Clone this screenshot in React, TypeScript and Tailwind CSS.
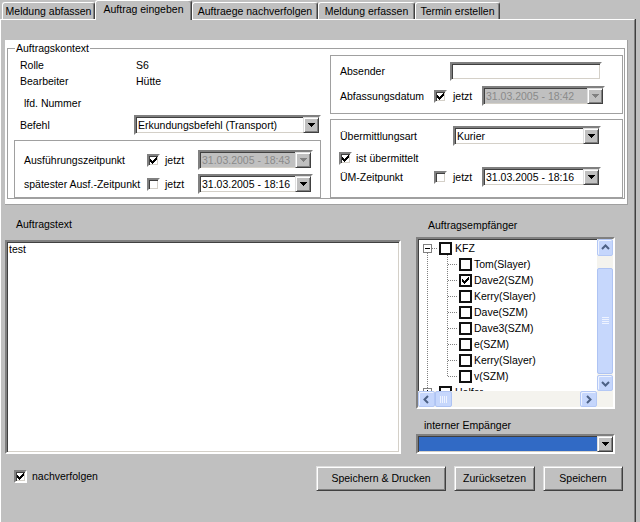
import React from "react";

const sunken =
  "border-2 border-t-[#808080] border-l-[#808080] border-r-white border-b-white shadow-[inset_1px_1px_0_#404040,inset_-1px_-1px_0_#d4d0c8]";
const raised =
  "border border-t-[#dfdfdf] border-l-[#dfdfdf] border-r-[#404040] border-b-[#404040] shadow-[inset_1px_1px_0_#ffffff,inset_-1px_-1px_0_#808080]";

function Arrow({ gray }: { gray?: boolean }) {
  return (
    <svg width="7" height="4" viewBox="0 0 7 4" shapeRendering="crispEdges">
      <path d="M0 0H7V1H6V2H5V3H4V4H3V3H2V2H1V1H0Z" fill={gray ? "#808080" : "#000"} />
    </svg>
  );
}

function Tick() {
  const cols = [2, 3, 4, 3, 2, 1, 0];
  return (
    <svg width="7" height="7" viewBox="0 0 7 7" shapeRendering="crispEdges">
      {cols.map((y, x) => (
        <rect key={x} x={x} y={y} width="1" height="3" fill="#000" />
      ))}
    </svg>
  );
}

function Check({ checked }: { checked?: boolean }) {
  return (
    <div className={`flex h-[13px] w-[13px] flex-none items-center justify-center bg-white ${sunken}`}>
      {checked && <Tick />}
    </div>
  );
}

function TreeCheck({ checked }: { checked?: boolean }) {
  return (
    <div className="flex h-[13px] w-[13px] flex-none items-center justify-center border-2 border-[#111] bg-white">
      {checked && <Tick />}
    </div>
  );
}

function Combo({
  className,
  text,
  disabled,
  blue,
}: {
  className: string;
  text?: string;
  disabled?: boolean;
  blue?: boolean;
}) {
  const fill = blue ? "bg-[#316ac5]" : disabled ? "bg-[#c0c0c0] text-[#8a8a8a]" : "bg-white";
  return (
    <div className={`flex h-[20px] flex-none ${sunken} ${fill} ${className}`}>
      <div className="flex-1 overflow-hidden whitespace-nowrap pl-[2px] leading-[16px]">{text}</div>
      <div className={`flex w-[16px] items-center justify-center bg-[#c0c0c0] ${raised}`}>
        <Arrow gray={disabled} />
      </div>
    </div>
  );
}

function Jetzt({ checked, label, labelW }: { checked?: boolean; label: string; labelW: string }) {
  return (
    <>
      <span className={`flex-none whitespace-nowrap ${labelW}`}>{label}</span>
      <Check checked={checked} />
      <span className="ml-[5px] w-[33px] flex-none">jetzt</span>
    </>
  );
}

function Tab({ label, w, active }: { label: string; w: string; active?: boolean }) {
  return (
    <div
      className={`flex flex-none items-center justify-center whitespace-nowrap rounded-t-[3px] border-t border-l border-r border-t-white border-l-white border-r-[#404040] bg-[#c0c0c0] shadow-[inset_-1px_0_0_#808080] ${w} ${
        active ? "relative z-10 -mb-px h-[20px] pb-[2px]" : "h-[17px]"
      }`}
    >
      {label}
    </div>
  );
}

function Chevron({ dir }: { dir: "up" | "down" | "left" | "right" }) {
  const pts = {
    up: "1,6 4.5,2.5 8,6",
    down: "1,3 4.5,6.5 8,3",
    left: "6,1 2.5,4.5 6,8",
    right: "3,1 6.5,4.5 3,8",
  }[dir];
  return (
    <svg width="9" height="9" viewBox="0 0 9 9">
      <polyline points={pts} fill="none" stroke="#4d6185" strokeWidth="2" />
    </svg>
  );
}

function ScrollBtn({ dir, className }: { dir: "up" | "down" | "left" | "right"; className: string }) {
  return (
    <div
      className={`flex flex-none items-center justify-center rounded-[2px] border border-[#b4c8f5] bg-[#c5d6fc] shadow-[inset_1px_1px_0_#eef3ff] ${className}`}
    >
      <Chevron dir={dir} />
    </div>
  );
}

const kids: [string, boolean][] = [
  ["Tom(Slayer)", false],
  ["Dave2(SZM)", true],
  ["Kerry(Slayer)", false],
  ["Dave(SZM)", false],
  ["Dave3(SZM)", false],
  ["e(SZM)", false],
  ["Kerry(Slayer)", false],
  ["v(SZM)", false],
];

function Expander({ open }: { open?: boolean }) {
  return (
    <div className="relative flex h-[9px] w-[9px] flex-none items-center justify-center border border-[#808080] bg-white">
      <div className="h-px w-[5px] bg-black" />
      {!open && <div className="absolute h-[5px] w-px bg-black" />}
    </div>
  );
}

function Tree() {
  return (
    <div className={`mt-[5px] flex h-[172px] flex-col bg-white ${sunken}`}>
      <div className="flex h-[152px]">
        <div className="relative flex-1 overflow-hidden pt-[1px]">
          <svg className="absolute left-0 top-0" width="179" height="152">
            <g stroke="#808080" strokeDasharray="1 1" shapeRendering="crispEdges">
              <line x1="9.5" y1="14" x2="9.5" y2="149" />
              <line x1="14" y1="9.5" x2="20" y2="9.5" />
              <line x1="29.5" y1="16" x2="29.5" y2="137" />
              {kids.map((_, k) => (
                <line key={k} x1="30" y1={25.5 + 16 * k} x2="40" y2={25.5 + 16 * k} />
              ))}
            </g>
          </svg>
          <div className="relative flex h-[16px] items-center pl-[5px]">
            <Expander open />
            <div className="ml-[7px]">
              <TreeCheck />
            </div>
            <span className="ml-[3px]">KFZ</span>
          </div>
          {kids.map(([name, c], i) => (
            <div key={i} className="relative flex h-[16px] items-center pl-[41px]">
              <TreeCheck checked={c} />
              <span className="ml-[2px] whitespace-nowrap">{name}</span>
            </div>
          ))}
          <div className="relative flex h-[16px] items-center pl-[5px]">
            <Expander />
            <div className="ml-[7px]">
              <TreeCheck />
            </div>
            <span className="ml-[3px]">Helfer</span>
          </div>
        </div>
        <div className="flex w-[16px] flex-none flex-col bg-[#f4f3ee]">
          <ScrollBtn dir="up" className="h-[17px]" />
          <div className="h-[12px] flex-none" />
          <div className="flex flex-1 items-center justify-center rounded-[2px] border border-[#aec3f3] bg-[#c6d7fc]">
            <svg width="7" height="8" viewBox="0 0 7 8" shapeRendering="crispEdges">
              {[0, 2, 4, 6].map((y) => (
                <rect key={y} x="0" y={y} width="7" height="1" fill="#eef3ff" />
              ))}
            </svg>
          </div>
          <div className="h-[1px] flex-none" />
          <ScrollBtn dir="down" className="h-[16px]" />
        </div>
      </div>
      <div className="flex h-[16px]">
        <div className="flex w-[179px] bg-[#f4f3ee]">
          <ScrollBtn dir="left" className="w-[17px]" />
          <div className="flex w-[17px] flex-none items-center justify-center rounded-[2px] border border-[#aec3f3] bg-[#c6d7fc]">
            <svg width="8" height="7" viewBox="0 0 8 7" shapeRendering="crispEdges">
              {[0, 2, 4, 6].map((x) => (
                <rect key={x} x={x} y="0" width="1" height="7" fill="#eef3ff" />
              ))}
            </svg>
          </div>
          <div className="flex-1" />
          <ScrollBtn dir="right" className="w-[17px]" />
        </div>
        <div className="w-[16px] bg-[#f4f3ee]" />
      </div>
    </div>
  );
}

function Button({ label, w, className = "" }: { label: string; w: string; className?: string }) {
  return (
    <div className={`flex h-[25px] flex-none items-center justify-center bg-[#c0c0c0] ${raised} ${w} ${className}`}>
      {label}
    </div>
  );
}

export default function App() {
  return (
    <div className="h-[522px] w-[640px] overflow-hidden bg-[#c0c0c0] font-['Liberation_Sans',Arial,sans-serif] text-[10.5px] leading-[13px] text-black">
      <div className="flex h-[19px] items-end pl-[2px]">
        <Tab label="Meldung abfassen" w="w-[93px]" />
        <Tab label="Auftrag eingeben" w="w-[97px]" active />
        <Tab label="Auftraege nachverfolgen" w="w-[126px]" />
        <Tab label="Meldung erfassen" w="w-[97px]" />
        <Tab label="Termin erstellen" w="w-[85px]" />
      </div>

      <div className="flex h-[503px] w-[635px] flex-col border-t border-l border-r border-t-white border-l-white border-r-[#808080] shadow-[1px_0_0_#404040]">
        {/* Auftragskontext */}
        <div className="ml-[4px] mt-[20px] h-[165px] w-[623px] border-r border-b border-[#a0a0a0] bg-white">
          <div className="relative ml-[2px] mt-[8px] flex h-[151px] w-[618px] border border-[#a0a0a0]">
            <span className="absolute left-[7px] top-[-7px] bg-white px-[1px]">Auftragskontext</span>

            <div className="flex w-[314px] flex-none flex-col">
              <div className="mt-[8px] flex h-[16px] items-center pl-[12px]">
                <span className="w-[116px] flex-none">Rolle</span>
                <span>S6</span>
              </div>
              <div className="flex h-[16px] items-center pl-[12px]">
                <span className="w-[116px] flex-none">Bearbeiter</span>
                <span>Hütte</span>
              </div>
              <div className="mt-[6px] flex h-[16px] items-center pl-[16px]">
                <span>lfd. Nummer</span>
              </div>
              <div className="mt-[4px] flex h-[20px] items-center pl-[12px]">
                <span className="w-[114px] flex-none">Befehl</span>
                <Combo className="w-[187px]" text="Erkundungsbefehl (Transport)" />
              </div>
              <div className="ml-[6px] mt-[5px] flex h-[58px] w-[307px] flex-col border border-[#a0a0a0]">
                <div className="mt-[9px] flex h-[20px] items-center pl-[9px]">
                  <Jetzt label="Ausführungszeitpunkt" labelW="w-[123px]" checked />
                  <Combo className="w-[115px]" text="31.03.2005 - 18:43" disabled />
                </div>
                <div className="mt-[4px] flex h-[20px] items-center pl-[9px]">
                  <Jetzt label="spätester Ausf.-Zeitpunkt" labelW="w-[123px]" />
                  <Combo className="w-[115px]" text="31.03.2005 - 18:16" />
                </div>
              </div>
            </div>

            <div className="ml-[8px] flex w-[293px] flex-none flex-col">
              <div className="mt-[6px] flex h-[59px] flex-col border border-[#a0a0a0]">
                <div className="mt-[6px] flex h-[19px] items-center pl-[9px]">
                  <span className="w-[110px] flex-none">Absender</span>
                  <div className={`h-[19px] w-[152px] bg-white ${sunken}`} />
                </div>
                <div className="mt-[5px] flex h-[20px] items-center pl-[9px]">
                  <span className="w-[94px] flex-none">Abfassungsdatum</span>
                  <Check checked />
                  <span className="ml-[6px] w-[29px] flex-none">jetzt</span>
                  <Combo className="w-[123px]" text="31.03.2005 - 18:42" disabled />
                </div>
              </div>
              <div className="mt-[5px] flex h-[79px] flex-col border border-[#a0a0a0]">
                <div className="mt-[6px] flex h-[20px] items-center pl-[9px]">
                  <span className="w-[113px] flex-none">Übermittlungsart</span>
                  <Combo className="w-[148px]" text="Kurier" />
                </div>
                <div className="mt-[6px] flex h-[13px] items-center pl-[8px]">
                  <Check checked />
                  <span className="ml-[4px]">ist übermittelt</span>
                </div>
                <div className="mt-[2px] flex h-[20px] items-center pl-[9px]">
                  <span className="w-[94px] flex-none">ÜM-Zeitpunkt</span>
                  <Check />
                  <span className="ml-[6px] w-[29px] flex-none">jetzt</span>
                  <Combo className="w-[119px]" text="31.03.2005 - 18:16" />
                </div>
              </div>
            </div>
          </div>
        </div>

        {/* Text und Empfänger */}
        <div className="flex">
          <div className="ml-[4px] flex w-[396px] flex-none flex-col">
            <span className="mt-[13px] pl-[11px]">Auftragstext</span>
            <div className={`mt-[9px] h-[214px] bg-white px-[2px] pt-[1px] ${sunken}`}>test</div>
          </div>
          <div className="ml-[15px] flex w-[199px] flex-none flex-col">
            <span className="mt-[14px] pl-[12px]">Auftragsempfänger</span>
            <Tree />
            <span className="mt-[10px] pl-[8px]">interner Empänger</span>
            <Combo className="mt-[2px] w-[199px]" blue />
          </div>
        </div>

        <div className="mt-[12px] flex h-[25px] items-start">
          <div className="ml-[13px] mt-[4px] flex items-center">
            <Check checked />
            <span className="ml-[5px]">nachverfolgen</span>
          </div>
          <Button label="Speichern & Drucken" w="w-[130px]" className="ml-auto" />
          <Button label="Zurücksetzen" w="w-[81px]" className="ml-[8px]" />
          <Button label="Speichern" w="w-[80px]" className="ml-[8px] mr-[11px]" />
        </div>
      </div>
    </div>
  );
}
